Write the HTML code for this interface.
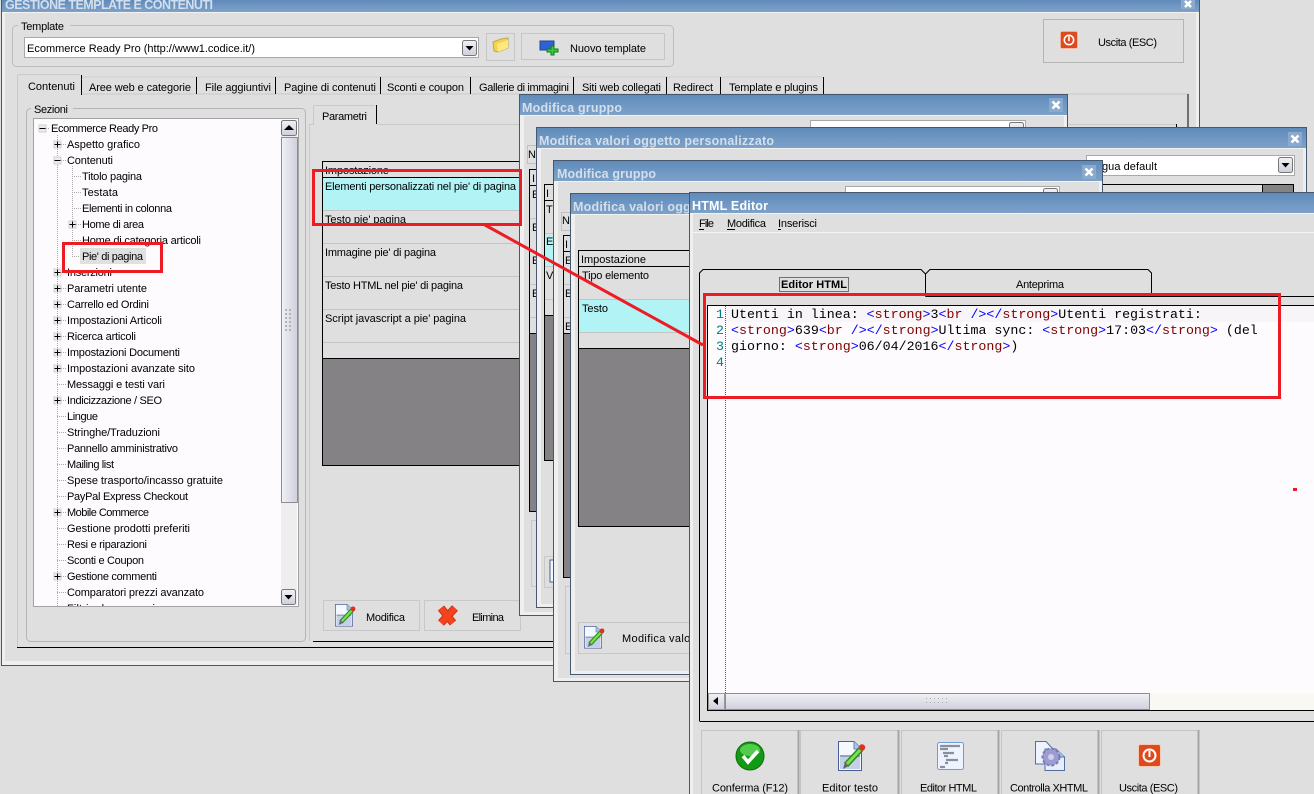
<!DOCTYPE html>
<html><head><meta charset="utf-8"><title>Gestione template</title>
<style>
html,body{margin:0;padding:0;background:#dfdfdf;width:1314px;height:794px;overflow:hidden}
svg{display:block;position:absolute;left:0;top:0}
text{font-family:"Liberation Sans",sans-serif;font-size:11px;fill:#000;white-space:pre}
.t{font-size:12.5px;font-weight:bold;fill:#d3dfec}
.c{font-family:"Liberation Mono",monospace;font-size:13.3px}
.b{fill:#0000ff}.r{fill:#800000}.n{fill:#008080}
</style></head><body>
<svg width="1314" height="794" viewBox="0 0 1314 794" xmlns="http://www.w3.org/2000/svg">
<defs>
<linearGradient id="tb" x1="0" y1="0" x2="0" y2="1"><stop offset="0" stop-color="#5f8ab9"/><stop offset=".5" stop-color="#6f97c2"/><stop offset="1" stop-color="#7ea1c8"/></linearGradient>
<linearGradient id="sb" x1="0" y1="0" x2="1" y2="0"><stop offset="0" stop-color="#f1f1f6"/><stop offset="1" stop-color="#cfcfdd"/></linearGradient>
<linearGradient id="sh" x1="0" y1="0" x2="0" y2="1"><stop offset="0" stop-color="#f1f1f6"/><stop offset="1" stop-color="#cfcfdd"/></linearGradient>
<g id="doc"><path d="M.5.5H16L23.500 8V29.500H.5Z" fill="#f4f8ff" stroke="#4a5f98"/><path d="M16 .5V8H23.500" fill="#a9c6ea" stroke="#6d86b4"/><rect x="2" y="14" width="20" height="14" fill="#c4d0ea"/><rect x="2" y="14" width="20" height="2" fill="#97a3b8"/><path d="M8 24L23 8" stroke="#2e8a20" stroke-width="6"/><path d="M8 24L23 8" stroke="#79e04e" stroke-width="3"/><path d="M5 28L7 21L11 25Z" fill="#666"/><circle cx="24" cy="6.500" r="3.200" fill="#d9331d"/></g>
<g id="pw"><rect x=".5" y=".5" width="22" height="22" rx="2" fill="#dd4a1e" stroke="#f6c9b5"/><circle cx="11.500" cy="11.500" r="6" fill="none" stroke="#fff" stroke-width="2"/><rect x="10.500" y="7" width="2" height="6" fill="#fff"/></g>
<g id="xb"><rect x="-7" y="-7" width="14" height="14" fill="#8aa9cc"/><path d="M-3.500-3.500L3.500 3.500M3.500-3.500L-3.500 3.500" stroke="#fff" stroke-width="2.600"/></g>
<g id="arr"><rect x=".5" y=".5" width="14" height="15" rx="2" fill="url(#sh)" stroke="#777"/><path d="M3.500 6H11.500L7.500 10.500Z" fill="#000"/></g>
<g id="plus"><rect x="-3.500" y="-3.500" width="7" height="7" fill="#ececec" stroke="#d0d0d0"/><path d="M-3 0H3M0-3V3" stroke="#000"/></g>
<g id="minus"><rect x="-3.500" y="-3.500" width="7" height="7" fill="#ececec" stroke="#d0d0d0"/><path d="M-3 0H3" stroke="#000"/></g>
</defs>

<rect width="1314" height="794" fill="#dfdfdf"/>

<!-- MAIN WINDOW -->
<rect x="1" y="0" width="1199" height="665.500" fill="#efefef"/>
<path d="M1.500 0V665.500H1199.500V0" fill="none" stroke="#46586f"/>
<rect x="5" y="13" width="1191" height="648" fill="#dfdfdf"/>
<rect x="2" y="0" width="1197" height="12" fill="url(#tb)"/>
<rect x="2" y="12" width="1197" height="1" fill="#f2f2f2"/>
<text class="t" x="5" y="9" textLength="208">GESTIONE TEMPLATE E CONTENUTI</text>
<rect x="1181" y="0" width="14" height="9" fill="#8aa9cc"/><path d="M1185 1L1191 7M1191 1L1185 7" stroke="#fff" stroke-width="2.600"/>

<!-- template group -->
<rect x="12.500" y="25.500" width="661" height="41" rx="4" fill="none" stroke="#bdbdbd"/>
<rect x="18" y="22" width="52" height="8" fill="#dfdfdf"/>
<text x="21" y="30" textLength="43">Template</text>
<rect x="24.500" y="37.500" width="454" height="20" fill="#fff" stroke="#a9a9a9"/>
<text x="27" y="52" textLength="228">Ecommerce Ready Pro (http://www1.codice.it/)</text>
<use href="#arr" x="462" y="40"/>
<rect x="486.500" y="33.500" width="28" height="27" fill="#dfdfdf" stroke="#c6c6c6"/>
<path d="M493 42L501 39L508 38V48L498 52L494 51Z" fill="#f6d24a" stroke="#b8a85a"/><path d="M497 44L508 40V48L498 52Z" fill="#ffe97f"/>
<rect x="521.500" y="33.500" width="143" height="26" fill="#dfdfdf" stroke="#c6c6c6"/>
<rect x="540" y="41" width="14" height="9" fill="#2f62d4" stroke="#24468f"/>
<path d="M551 46h3v3h4v3h-4v3h-3v-3h-4v-3h4z" fill="#35c93b" stroke="#157a1d"/>
<text x="570" y="52" textLength="76">Nuovo template</text>
<rect x="1043.500" y="19.500" width="140" height="43" fill="#dfdfdf" stroke="#b5b5b5"/>
<use href="#pw" transform="translate(1060 31) scale(.78)"/>
<text x="1098" y="46" textLength="59">Uscita (ESC)</text>

<!-- tabs -->
<path d="M81 94H1188V647" fill="none" stroke="#c9c9c9"/>
<path d="M1188 94V127" stroke="#000"/>
<path d="M17.500 647V77Q17.500 74.500 20 74.500H80" fill="none" stroke="#c9c9c9"/>
<path d="M81.500 75V95" stroke="#000"/>
<path d="M82 77H823" stroke="#cfcfcf"/>
<path d="M196.500 77V94M275.500 77V94M380.500 77V94M470.500 77V94M573.500 77V94M666.500 77V94M720.500 77V94M823.500 77V94" stroke="#000"/>
<text x="28" y="90" textLength="47">Contenuti</text>
<text x="89" y="91" textLength="102">Aree web e categorie</text>
<text x="205" y="91" textLength="66">File aggiuntivi</text>
<text x="284" y="91" textLength="92">Pagine di contenuti</text>
<text x="387" y="91" textLength="77">Sconti e coupon</text>
<text x="479" y="91" textLength="90">Gallerie di immagini</text>
<text x="582" y="91" textLength="79">Siti web collegati</text>
<text x="673" y="91" textLength="40">Redirect</text>
<text x="729" y="91" textLength="89">Template e plugins</text>
<path d="M17 647.500H1188M313 641.500H1176" stroke="#000"/>

<!-- sezioni group -->
<rect x="26.500" y="108.500" width="279" height="533" rx="4" fill="none" stroke="#b5b5b5"/>
<rect x="31" y="104" width="42" height="8" fill="#dfdfdf"/>
<text x="34" y="113" textLength="34">Sezioni</text>
<rect x="33.500" y="118.500" width="265" height="488" fill="#fefbfe" stroke="#a3a3a3"/>
<g stroke="#aaa" stroke-dasharray="1 1" fill="none">
<path d="M57.500 135V606M72.500 166V256M42 128.500H50M57 144.500H66M57 160.500H66M72 176.500H81M72 192.500H81M72 208.500H81M72 224.500H81M72 240.500H81M72 256.500H81M57 272.500H66M57 288.500H66M57 304.500H66M57 320.500H66M57 336.500H66M57 352.500H66M57 368.500H66M57 384.500H66M57 400.500H66M57 416.500H66M57 432.500H66M57 448.500H66M57 464.500H66M57 480.500H66M57 496.500H66M57 512.500H66M57 528.500H66M57 544.500H66M57 560.500H66M57 576.500H66M57 592.500H66"/>
</g>
<use href="#minus" x="42.500" y="128.500"/>
<use href="#plus" x="57.500" y="144.500"/><use href="#minus" x="57.500" y="160.500"/><use href="#plus" x="72.500" y="224.500"/>
<use href="#plus" x="57.500" y="272.500"/><use href="#plus" x="57.500" y="288.500"/><use href="#plus" x="57.500" y="304.500"/><use href="#plus" x="57.500" y="320.500"/><use href="#plus" x="57.500" y="336.500"/><use href="#plus" x="57.500" y="352.500"/><use href="#plus" x="57.500" y="368.500"/><use href="#plus" x="57.500" y="400.500"/><use href="#plus" x="57.500" y="512.500"/><use href="#plus" x="57.500" y="576.500"/>
<rect x="80" y="248" width="66" height="16" fill="#e0e0e0"/>
<text x="51" y="132" textLength="107">Ecommerce Ready Pro</text>
<text x="67" y="148" textLength="73">Aspetto grafico</text>
<text x="67" y="164" textLength="46">Contenuti</text>
<text x="82" y="180" textLength="60">Titolo pagina</text>
<text x="82" y="196" textLength="36">Testata</text>
<text x="82" y="212" textLength="90">Elementi in colonna</text>
<text x="82" y="228" textLength="62">Home di area</text>
<text x="82" y="244" textLength="119">Home di categoria articoli</text>
<text x="82" y="260" textLength="61">Pie' di pagina</text>
<text x="67" y="276" textLength="45">Inserzioni</text>
<text x="67" y="292" textLength="80">Parametri utente</text>
<text x="67" y="308" textLength="82">Carrello ed Ordini</text>
<text x="67" y="324" textLength="95">Impostazioni Articoli</text>
<text x="67" y="340" textLength="69">Ricerca articoli</text>
<text x="67" y="356" textLength="113">Impostazioni Documenti</text>
<text x="67" y="372" textLength="128">Impostazioni avanzate sito</text>
<text x="67" y="388" textLength="98">Messaggi e testi vari</text>
<text x="67" y="404" textLength="95">Indicizzazione / SEO</text>
<text x="67" y="420" textLength="31">Lingue</text>
<text x="67" y="436" textLength="93">Stringhe/Traduzioni</text>
<text x="67" y="452" textLength="111">Pannello amministrativo</text>
<text x="67" y="468" textLength="47">Mailing list</text>
<text x="67" y="484" textLength="156">Spese trasporto/incasso gratuite</text>
<text x="67" y="500" textLength="121">PayPal Express Checkout</text>
<text x="67" y="516" textLength="82">Mobile Commerce</text>
<text x="67" y="532" textLength="123">Gestione prodotti preferiti</text>
<text x="67" y="548" textLength="80">Resi e riparazioni</text>
<text x="67" y="564" textLength="77">Sconti e Coupon</text>
<text x="67" y="580" textLength="90">Gestione commenti</text>
<text x="67" y="596" textLength="137">Comparatori prezzi avanzato</text>
<text x="67" y="612" textLength="88">Filtri ed accessori</text>
<rect x="34" y="607" width="265" height="9" fill="#dfdfdf"/>
<path d="M33 606.500H299" stroke="#a3a3a3"/>
<rect x="281" y="120" width="16" height="485" fill="#eeeeee"/>
<rect x="281.500" y="137.500" width="16" height="365" fill="url(#sb)" stroke="#8d8d93"/>
<rect x="281.500" y="120.500" width="15" height="15" rx="2" fill="url(#sh)" stroke="#777"/><path d="M284 130L289 125L294 130Z" fill="#000"/>
<use href="#arr" x="281" y="589"/>
<g fill="#b4b4b4"><path d="M285 309h2v2h-2zM289 309h2v2h-2zM285 313h2v2h-2zM289 313h2v2h-2zM285 317h2v2h-2zM289 317h2v2h-2zM285 321h2v2h-2zM289 321h2v2h-2zM285 325h2v2h-2zM289 325h2v2h-2zM285 329h2v2h-2zM289 329h2v2h-2z"/></g>

<!-- parametri panel -->
<path d="M309.500 641V124.500H313.500V107Q313.500 105.500 315 105.500H375" fill="none" stroke="#c9c9c9"/>
<path d="M377 124.500H1176" stroke="#c9c9c9"/>
<path d="M376.500 105V124" stroke="#000"/>
<path d="M1176.500 124V127" stroke="#000"/>
<text x="322" y="120" textLength="45">Parametri</text>
<rect x="322.500" y="161.500" width="210" height="304" fill="#dfdfdf" stroke="#000"/>
<text x="325" y="174" textLength="64">Impostazione</text>
<rect x="323" y="177" width="210" height="1" fill="#000"/>
<rect x="323" y="178" width="210" height="32" fill="#b2f3f5"/>
<path d="M323 210.500H533M323 243.500H533M323 276.500H533M323 309.500H533M323 342.500H533" stroke="#c4c4c4"/>
<text x="325" y="190" textLength="191">Elementi personalizzati nel pie' di pagina</text>
<text x="325" y="223" textLength="81">Testo pie' pagina</text>
<text x="325" y="256" textLength="111">Immagine pie' di pagina</text>
<text x="325" y="289" textLength="138">Testo HTML nel pie' di pagina</text>
<text x="325" y="322" textLength="141">Script javascript a pie' pagina</text>
<rect x="323" y="359" width="210" height="106" fill="#848284"/>
<rect x="323" y="358" width="210" height="1" fill="#000"/>
<rect x="323.500" y="600.500" width="96" height="30" fill="#dfdfdf" stroke="#c8c8c8"/>
<use href="#doc" transform="translate(335 604) scale(.75)"/>
<text x="366" y="621" textLength="39">Modifica</text>
<rect x="424.500" y="600.500" width="96" height="30" fill="#dfdfdf" stroke="#c8c8c8"/>
<path d="M441 608L453 623M455 608L441 623" stroke="#c9301a" stroke-width="8"/>
<path d="M441 608L453 623M455 608L441 623" stroke="#f4431d" stroke-width="6"/>
<text x="472" y="621" textLength="32">Elimina</text>

<!-- W1 Modifica gruppo -->
<rect x="519.500" y="94.500" width="548" height="521" fill="#efefef" stroke="#46586f"/>
<rect x="524" y="116" width="540" height="496" fill="#dfdfdf"/>
<rect x="520" y="95" width="547" height="20" fill="url(#tb)"/>
<rect x="520" y="115" width="547" height="1" fill="#f2f2f2"/>
<text class="t" x="522" y="112" textLength="100">Modifica gruppo</text>
<use href="#xb" x="1056" y="105"/>
<rect x="810.500" y="120.500" width="215" height="20" fill="#fff" stroke="#a9a9a9"/>
<use href="#arr" x="1009" y="122"/>
<rect x="527.500" y="145.500" width="12" height="18" fill="#dfdfdf" stroke="#c0c0c0"/>
<text x="528" y="158">N</text>
<rect x="529.500" y="169.500" width="20" height="342" fill="#dfdfdf" stroke="#000"/>
<rect x="530" y="185" width="20" height="1" fill="#000"/>
<text x="532" y="182">I</text><text x="532" y="198">E</text><text x="532" y="231">E</text><text x="532" y="264">E</text><text x="532" y="297">E</text>
<path d="M530 218.500H550M530 251.500H550M530 284.500H550M530 317.500H550" stroke="#c4c4c4"/>
<rect x="530" y="334" width="20" height="177" fill="#848284"/><rect x="530" y="333" width="20" height="1" fill="#000"/>
<rect x="531.500" y="520.500" width="20" height="66" fill="#dfdfdf" stroke="#c8c8c8"/>

<!-- W2 Modifica valori -->
<rect x="536.500" y="127.500" width="770" height="480" fill="#efefef" stroke="#46586f"/>
<rect x="541" y="149" width="762" height="455" fill="#dfdfdf"/>
<rect x="537" y="128" width="769" height="20" fill="url(#tb)"/>
<rect x="537" y="148" width="769" height="1" fill="#f2f2f2"/>
<text class="t" x="539" y="145" textLength="235">Modifica valori oggetto personalizzato</text>
<use href="#xb" x="1295" y="139"/>
<rect x="1086.500" y="155.500" width="208" height="20" fill="#fff" stroke="#a9a9a9"/>
<text x="1102" y="170" textLength="55">gua default</text>
<use href="#arr" x="1278" y="157"/>
<rect x="544.500" y="184.500" width="749" height="276" fill="#dfdfdf" stroke="#000"/>
<rect x="1262" y="185" width="31" height="20" fill="#848284"/><path d="M1262.500 185V205" stroke="#000"/>
<rect x="545" y="200" width="20" height="1" fill="#000"/>
<rect x="545" y="235" width="20" height="32" fill="#b2f3f5"/>
<path d="M545 233.500H565M545 266.500H565M545 299.500H565" stroke="#c4c4c4"/>
<text x="546" y="197">I</text><text x="546" y="213">T</text><text x="546" y="245">E</text><text x="546" y="279">V</text>
<rect x="545" y="316" width="20" height="144" fill="#848284"/><rect x="545" y="315" width="20" height="1" fill="#000"/>
<rect x="544.500" y="556.500" width="20" height="31" fill="#dfdfdf" stroke="#c8c8c8"/>
<rect x="550" y="560" width="12" height="22" fill="#f4f8ff" stroke="#4a5f98"/>

<!-- W3 Modifica gruppo -->
<rect x="553.500" y="160.500" width="549" height="521" fill="#efefef" stroke="#46586f"/>
<rect x="558" y="182" width="541" height="496" fill="#dfdfdf"/>
<rect x="554" y="161" width="548" height="20" fill="url(#tb)"/>
<rect x="554" y="181" width="548" height="1" fill="#f2f2f2"/>
<text class="t" x="557" y="178" textLength="99">Modifica gruppo</text>
<use href="#xb" x="1089" y="172"/>
<rect x="845.500" y="186.500" width="214" height="20" fill="#fff" stroke="#a9a9a9"/>
<use href="#arr" x="1043" y="188"/>
<rect x="561.500" y="212.500" width="12" height="18" fill="#dfdfdf" stroke="#c0c0c0"/>
<text x="562" y="224">N</text>
<rect x="563.500" y="235.500" width="20" height="342" fill="#dfdfdf" stroke="#000"/>
<rect x="564" y="251" width="20" height="1" fill="#000"/>
<text x="565" y="248">I</text><text x="565" y="264">E</text><text x="565" y="297">E</text><text x="565" y="330">E</text>
<path d="M564 284.500H584M564 317.500H584" stroke="#c4c4c4"/>
<rect x="564" y="334" width="20" height="243" fill="#848284"/><rect x="564" y="333" width="20" height="1" fill="#000"/>
<rect x="565.500" y="586.500" width="20" height="67" fill="#dfdfdf" stroke="#c8c8c8"/>

<!-- W4 Modifica valori -->
<rect x="570.500" y="193.500" width="400" height="481" fill="#efefef" stroke="#46586f"/>
<rect x="575" y="215" width="392" height="456" fill="#dfdfdf"/>
<rect x="571" y="194" width="399" height="20" fill="url(#tb)"/>
<rect x="571" y="214" width="399" height="1" fill="#f2f2f2"/>
<text class="t" x="573" y="211" textLength="235">Modifica valori oggetto personalizzato</text>
<rect x="578.500" y="250.500" width="200" height="276" fill="#dfdfdf" stroke="#000"/>
<text x="581" y="263" textLength="65">Impostazione</text>
<rect x="579" y="266" width="200" height="1" fill="#000"/>
<text x="582" y="279" textLength="67">Tipo elemento</text>
<path d="M579 299.500H779M579 332.500H779" stroke="#c4c4c4"/>
<rect x="579" y="300" width="200" height="32" fill="#b2f3f5"/>
<text x="582" y="312" textLength="26">Testo</text>
<rect x="579" y="349" width="200" height="177" fill="#848284"/><rect x="579" y="348" width="200" height="1" fill="#000"/>
<rect x="578.500" y="622.500" width="200" height="31" fill="#dfdfdf" stroke="#c8c8c8"/>
<use href="#doc" transform="translate(584 626) scale(.75)"/>
<text x="622" y="642" textLength="75">Modifica valori</text>

<!-- W5 HTML EDITOR -->
<rect x="689" y="192" width="625" height="602" fill="#efefef"/>
<path d="M689.500 794V192.500H1314" fill="none" stroke="#46586f"/>
<rect x="693" y="214" width="621" height="580" fill="#dfdfdf"/>
<rect x="690" y="193" width="624" height="20" fill="url(#tb)"/>
<rect x="690" y="213" width="624" height="1" fill="#f2f2f2"/>
<text class="t" x="692" y="210" textLength="76" style="fill:#fff">HTML Editor</text>
<text x="699" y="227" textLength="15">File</text><path d="M699 229.500H704" stroke="#000"/>
<text x="727" y="227" textLength="39">Modifica</text><path d="M727 229.500H735" stroke="#000"/>
<text x="778" y="227" textLength="39">Inserisci</text><path d="M778 229.500H781" stroke="#000"/>
<rect x="693" y="232" width="621" height="1" fill="#f5f5f5"/>

<path d="M925 296.500H1314" stroke="#000"/>
<path d="M699.500 721V273L703 269.500H921L925.500 274V296" fill="#dfdfdf" stroke="#000"/>
<path d="M925.500 296V274L930 269.500H1148L1151.500 273V296" fill="#dfdfdf" stroke="#000"/>
<path d="M699.500 721.500H1314" stroke="#000"/>
<rect x="700" y="296" width="225" height="4" fill="#dfdfdf"/>
<rect x="779.500" y="277.500" width="69" height="14" fill="none" stroke="#000" stroke-dasharray="1 1"/>
<text x="781" y="288" textLength="66" font-weight="bold">Editor HTML</text>
<text x="1016" y="288" textLength="48">Anteprima</text>

<rect x="708" y="306" width="606" height="404" fill="#fefbfe"/>
<path d="M707.500 711V305.500H1314M707.500 710.500H1314" fill="none" stroke="#000"/>
<rect x="726" y="306" width="588" height="16" fill="#f8f5f8"/>
<path d="M725.500 306V693" stroke="#008080" stroke-dasharray="1 1"/>
<text class="c n" x="716" y="318">1</text><text class="c n" x="716" y="334">2</text><text class="c n" x="716" y="350">3</text><text class="c n" x="716" y="366">4</text>
<text class="c" x="731" y="318">Utenti in linea: <tspan class="b">&lt;</tspan><tspan class="r">strong</tspan><tspan class="b">&gt;</tspan>3<tspan class="b">&lt;</tspan><tspan class="r">br</tspan> <tspan class="b">/&gt;&lt;/</tspan><tspan class="r">strong</tspan><tspan class="b">&gt;</tspan>Utenti registrati:</text>
<text class="c" x="731" y="334"><tspan class="b">&lt;</tspan><tspan class="r">strong</tspan><tspan class="b">&gt;</tspan>639<tspan class="b">&lt;</tspan><tspan class="r">br</tspan> <tspan class="b">/&gt;&lt;/</tspan><tspan class="r">strong</tspan><tspan class="b">&gt;</tspan>Ultima sync: <tspan class="b">&lt;</tspan><tspan class="r">strong</tspan><tspan class="b">&gt;</tspan>17:03<tspan class="b">&lt;/</tspan><tspan class="r">strong</tspan><tspan class="b">&gt;</tspan> (del</text>
<text class="c" x="731" y="350">giorno: <tspan class="b">&lt;</tspan><tspan class="r">strong</tspan><tspan class="b">&gt;</tspan>06/04/2016<tspan class="b">&lt;/</tspan><tspan class="r">strong</tspan><tspan class="b">&gt;</tspan>)</text>
<rect x="708" y="693" width="606" height="17" fill="#f9f8f2"/>
<rect x="708.500" y="693.500" width="16" height="16" fill="url(#sh)" stroke="#999"/><path d="M718 697V705L713 701Z" fill="#000"/>
<rect x="725.500" y="693.500" width="424" height="16" fill="url(#sh)" stroke="#8d8d93"/>
<g fill="#aaa"><path d="M926 698h1v1h-1zM930 698h1v1h-1zM934 698h1v1h-1zM938 698h1v1h-1zM942 698h1v1h-1zM946 698h1v1h-1zM926 702h1v1h-1zM930 702h1v1h-1zM934 702h1v1h-1zM938 702h1v1h-1zM942 702h1v1h-1zM946 702h1v1h-1z"/></g>

<!-- bottom buttons -->
<path d="M701.500 794V730.500H798M800.500 794V730.500H898M901.500 794V730.500H998M1001.500 794V730.500H1098M1101.500 794V730.500H1198" fill="none" stroke="#c4c4c4"/>
<path d="M798.500 730V794M898.500 730V794M998.500 730V794M1098.500 730V794M1198.500 730V794" stroke="#a6a6a6" stroke-width="2"/>
<circle cx="750" cy="756" r="14" fill="#129a14" stroke="#0a6d0c"/><ellipse cx="750" cy="750" rx="10" ry="6" fill="#52cc4a"/>
<path d="M743 756L748 762L758 751" fill="none" stroke="#fff" stroke-width="3.600"/>
<use href="#doc" x="838" y="741"/>
<rect x="937.500" y="742.500" width="26" height="27" rx="2" fill="#eef4ff" stroke="#6f9ae0"/>
<path d="M940 746H960M940 749H948M943 753H954M944 756H948M946 760H958M945 763H948M940 767H945" stroke="#8a8f9a" stroke-width="2.200"/>
<path d="M1035.500 741.500H1046L1052 748V764H1035.500Z" fill="#eef4ff" stroke="#51709f"/>
<path d="M1045 749H1056L1064.500 757V770.500H1045Z" fill="#e6efff" stroke="#51709f"/>
<path d="M1056 749V757H1064.500" fill="#a9cbee" stroke="#51709f"/>
<circle cx="1051" cy="757" r="8.500" fill="#9c9cd2" stroke="#7a7ab2" stroke-width="2" stroke-dasharray="3 2"/><circle cx="1051" cy="757" r="3" fill="#cfcfe8"/>
<use href="#pw" x="1138" y="744"/>
<text x="712" y="791.500" textLength="76">Conferma (F12)</text>
<text x="822" y="791.500" textLength="56">Editor testo</text>
<text x="920" y="791.500" textLength="57">Editor HTML</text>
<text x="1010" y="791.500" textLength="78">Controlla XHTML</text>
<text x="1119" y="791.500" textLength="59">Uscita (ESC)</text>

<!-- RED highlights -->
<path d="M485 225L703 345" stroke="#ed1c24" stroke-width="3" fill="none"/>
<g fill="none" stroke="#ed1c24" stroke-width="3">
<rect x="313.500" y="170.500" width="207" height="54"/>
<rect x="63.500" y="243.500" width="98" height="28"/>
<rect x="704.500" y="294.500" width="575" height="103"/>
</g>
<rect x="1293" y="488" width="4" height="3" fill="#ed1c24"/>
</svg>
</body></html>
